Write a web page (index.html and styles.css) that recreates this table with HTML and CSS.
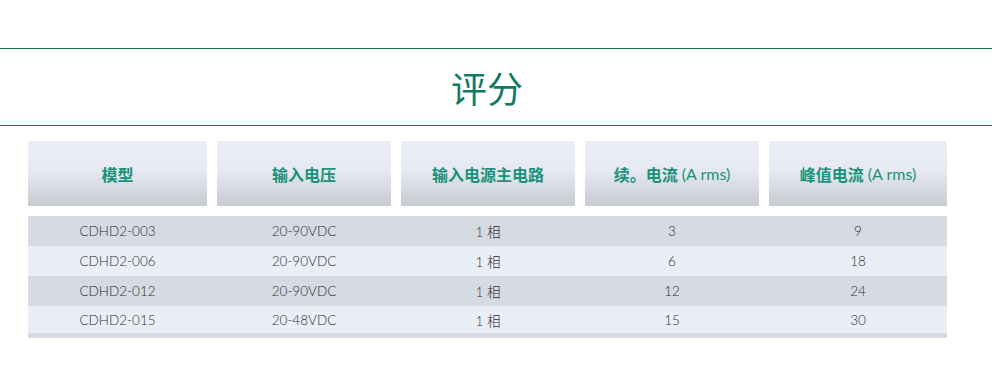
FILE: index.html
```html
<!DOCTYPE html>
<html lang="zh">
<head>
<meta charset="utf-8">
<title>评分</title>
<link rel="stylesheet" href="styles.css">
</head>
<body>
<div class="page">
  <div class="title-bar"><h1 class="title">评分</h1></div>
  <div class="table">
    <div class="head">
      <div class="th">模型</div>
      <div class="th">输入电压</div>
      <div class="th">输入电源主电路</div>
      <div class="th">续。电流 <span class="lat">(A rms)</span></div>
      <div class="th">峰值电流 <span class="lat">(A rms)</span></div>
    </div>
    <div class="body">
      <div class="row odd"><div>CDHD2-003</div><div>20-90VDC</div><div>1 相</div><div>3</div><div>9</div></div>
      <div class="row even"><div>CDHD2-006</div><div>20-90VDC</div><div>1 相</div><div>6</div><div>18</div></div>
      <div class="row odd"><div>CDHD2-012</div><div>20-90VDC</div><div>1 相</div><div>12</div><div>24</div></div>
      <div class="row even last"><div>CDHD2-015</div><div>20-48VDC</div><div>1 相</div><div>15</div><div>30</div></div>
      <div class="strip"></div>
    </div>
  </div>
</div>
</body>
</html>
```
FILE: styles.css
```css
html, body {
  margin: 0;
  padding: 0;
  background: #ffffff;
}
.page {
  padding-top: 48px;
}
.title-bar {
  border-top: 1px solid #117a65;
  border-bottom: 1px solid #117a65;
  height: 76px;
  display: flex;
  align-items: center;
  justify-content: center;
}
.title {
  margin: 0;
  font-family: "Noto Sans CJK SC", "Noto Sans", sans-serif;
  font-weight: 400;
  font-size: 36px;
  line-height: 1;
  color: #127a64;
  padding-right: 18px;
}
.table {
  margin: 15px 0 0 28px;
  width: 919px;
}
.head, .row {
  display: grid;
  grid-template-columns: 179px 174px 174px 174px 178px;
  column-gap: 10px;
}
.th {
  height: 65px;
  display: flex;
  align-items: center;
  justify-content: center;
  background: linear-gradient(to bottom, #eceff8 0%, #e6e9f2 45%, #c8cad1 100%);
  font-family: "Noto Sans CJK SC", sans-serif;
  font-weight: 700;
  font-size: 16px;
  color: #1a917a;
}
.lat {
  font-family: Lato, "Noto Sans", sans-serif;
  font-weight: 400;
  font-size: 16px;
  margin-left: 4px;
}
.body {
  margin-top: 10px;
}
.row {
  height: 30px;
  align-items: center;
  font-family: Lato, "Noto Sans CJK SC", sans-serif;
  font-size: 13.5px;
  font-weight: 300;
  color: #2e2e2e;
  text-align: center;
}
.row.odd { background: #d6dae2; }
.row.even { background: #eaeef7; }
.row.last { height: 27px; }
.strip {
  height: 5px;
  background: #d6dae2;
}
```
